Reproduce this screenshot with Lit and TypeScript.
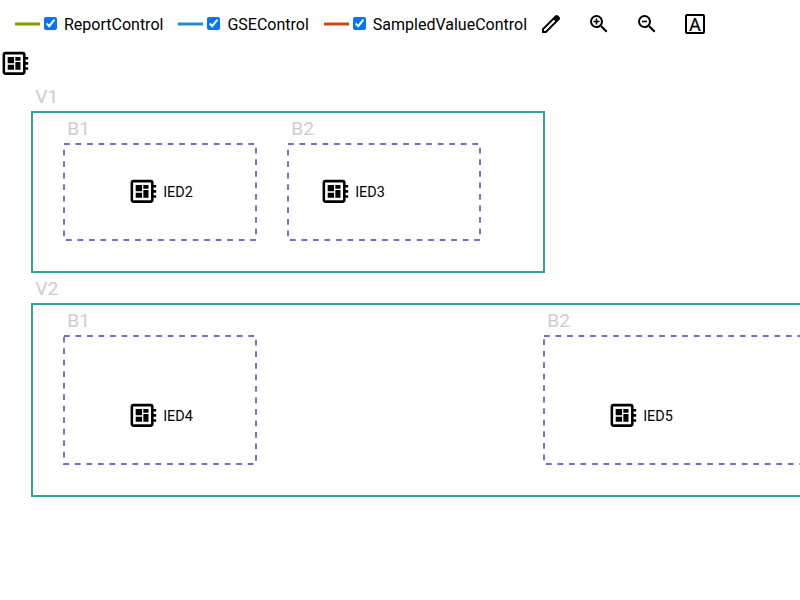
import { LitElement, html, svg, css } from "lit";
import { customElement } from "lit/decorators.js";

const GRID = 32;

const legend = [
  { name: "ReportControl", tone: "report" },
  { name: "GSEControl", tone: "gse" },
  { name: "SampledValueControl", tone: "smv" },
];

interface Area { name: string; x: number; y: number; w: number; h: number; }

const voltageLevels: Area[] = [
  { name: "V1", x: 1, y: 2, w: 16, h: 5 },
  { name: "V2", x: 1, y: 8, w: 27, h: 6 },
];

const bays: Area[] = [
  { name: "B1", x: 2, y: 3, w: 6, h: 3 },
  { name: "B2", x: 9, y: 3, w: 6, h: 3 },
  { name: "B1", x: 2, y: 9, w: 6, h: 4 },
  { name: "B2", x: 17, y: 9, w: 10, h: 4 },
];

const ieds = [
  { name: "", x: 0, y: 0 },
  { name: "IED2", x: 4, y: 4 },
  { name: "IED3", x: 10, y: 4 },
  { name: "IED4", x: 4, y: 11 },
  { name: "IED5", x: 19, y: 11 },
];

const lens = svg`<path d="M15.5 14h-.79l-.28-.27A6.471 6.471 0 0 0 16 9.5 6.5 6.5 0 1 0 9.5 16c1.61 0 3.09-.59 4.23-1.57l.27.28v.79l5 4.99L20.49 19l-4.99-5zm-6 0C7.01 14 5 11.99 5 9.5S7.01 5 9.5 5 14 7.01 14 9.5 11.99 14 9.5 14z"/>`;

const toolIcons = [
  svg`<path d="M5 19h1.425L16.2 9.225 14.775 7.8 5 17.575V19Zm-2 2v-4.25L16.2 3.575q.3-.275.663-.425.362-.15.762-.15t.775.15q.375.15.65.45L20.425 5q.3.275.437.65.138.375.138.75 0 .4-.138.763-.137.362-.437.662L7.25 21Z" fill-rule="evenodd"/>`,
  svg`${lens}<path class="sign" d="M6.5 9.5h6M9.5 6.5v6"/>`,
  svg`${lens}<path class="sign" d="M7 9.5h5"/>`,
  svg`<path d="M20 2H4c-1.1 0-2 .9-2 2v16c0 1.1.9 2 2 2h16c1.1 0 2-.9 2-2V4c0-1.1-.9-2-2-2zm0 18H4V4h16v16z"/><text class="letter" x="12" y="18.5">A</text>`,
];

@customElement("app-root")
export class AppRoot extends LitElement {
  static styles = css`
    :host {
      display: flex;
      flex-direction: column;
      width: 100%;
      height: 100vh;
      overflow: hidden;
      background: #fff;
      color: #000;
      font-family: Roboto, sans-serif;
    }
    .bar {
      display: flex;
      align-items: center;
      flex: none;
      height: 48px;
      padding-left: 15px;
    }
    .entry {
      display: flex;
      align-items: center;
      margin-right: 15px;
      font-size: 16px;
      line-height: 20px;
    }
    .swatch { display: block; width: 25px; height: 4px; margin-right: 4px; stroke-width: 3; }
    .report { stroke: #859900; }
    .gse { stroke: #268bd2; }
    .smv { stroke: #cb4b16; }
    .box { width: 13px; height: 13px; margin: 0 7px 1px 0; }
    .caption { padding-top: 1px; }
    .tools { display: flex; margin-left: -15px; }
    .tool {
      display: flex;
      width: 48px;
      height: 48px;
      padding: 12px;
      box-sizing: border-box;
      border: 0;
      background: none;
    }
    .icon { width: 24px; height: 24px; flex: none; }
    .sign { fill: none; stroke: #000; stroke-width: 1.6; }
    .letter { font: 400 18.3px Roboto, sans-serif; text-anchor: middle; stroke: #000; stroke-width: 0.2; }
    .canvas { display: block; flex: none; width: 1056px; height: 552px; }
    .level { fill: none; stroke: #2aa198; stroke-width: 1.92; }
    .bay { fill: none; stroke: #6c71c4; stroke-width: 1.92; stroke-dasharray: 5.76; }
    .area-label { font-size: 19.2px; font-weight: 400; fill: #cdcdcd; }
    .ied-label { font-size: 14.4px; }
  `;

  render() {
    return html`
      <div class="bar">
        ${legend.map(
          (l) => html`<label class="entry">
            <svg class="swatch ${l.tone}" viewBox="0 0 25 4"><line x1="0" y1="2" x2="25" y2="2" /></svg>
            <input class="box" type="checkbox" checked /><span class="caption">${l.name}</span>
          </label>`
        )}
        <div class="tools">
          ${toolIcons.map(
            (i) => html`<button class="tool"><svg class="icon" viewBox="0 0 24 24">${i}</svg></button>`
          )}
        </div>
      </div>
      <svg class="canvas" viewBox="0 0 1056 552">
        ${voltageLevels.map((a) => this.area(a, "level"))}
        ${bays.map((a) => this.area(a, "bay"))}
        ${ieds.map(
          (d) => svg`<g transform="translate(${d.x * GRID} ${d.y * GRID})">
            <path transform="scale(1.28)" d="M22 9V7h-2V5c0-1.1-.9-2-2-2H4c-1.1 0-2 .9-2 2v14c0 1.1.9 2 2 2h14c1.1 0 2-.9 2-2v-2h2v-2h-2v-2h2v-2h-2V9h2zm-4 10H4V5h14v14zM6 13h5v4H6v-4zm6-6h4v3h-4V7zM6 7h5v5H6V7zm6 4h4v6h-4v-6z"/>
            <text class="ied-label" x="35.2" y="21">${d.name}</text>
          </g>`
        )}
      </svg>
    `;
  }

  private area(a: Area, kind: string) {
    return svg`
      <rect class=${kind} x=${a.x * GRID} y=${a.y * GRID} width=${a.w * GRID} height=${a.h * GRID}/>
      <text class="area-label" x=${a.x * GRID + 3.2} y=${a.y * GRID - 9}>${a.name}</text>`;
  }
}
